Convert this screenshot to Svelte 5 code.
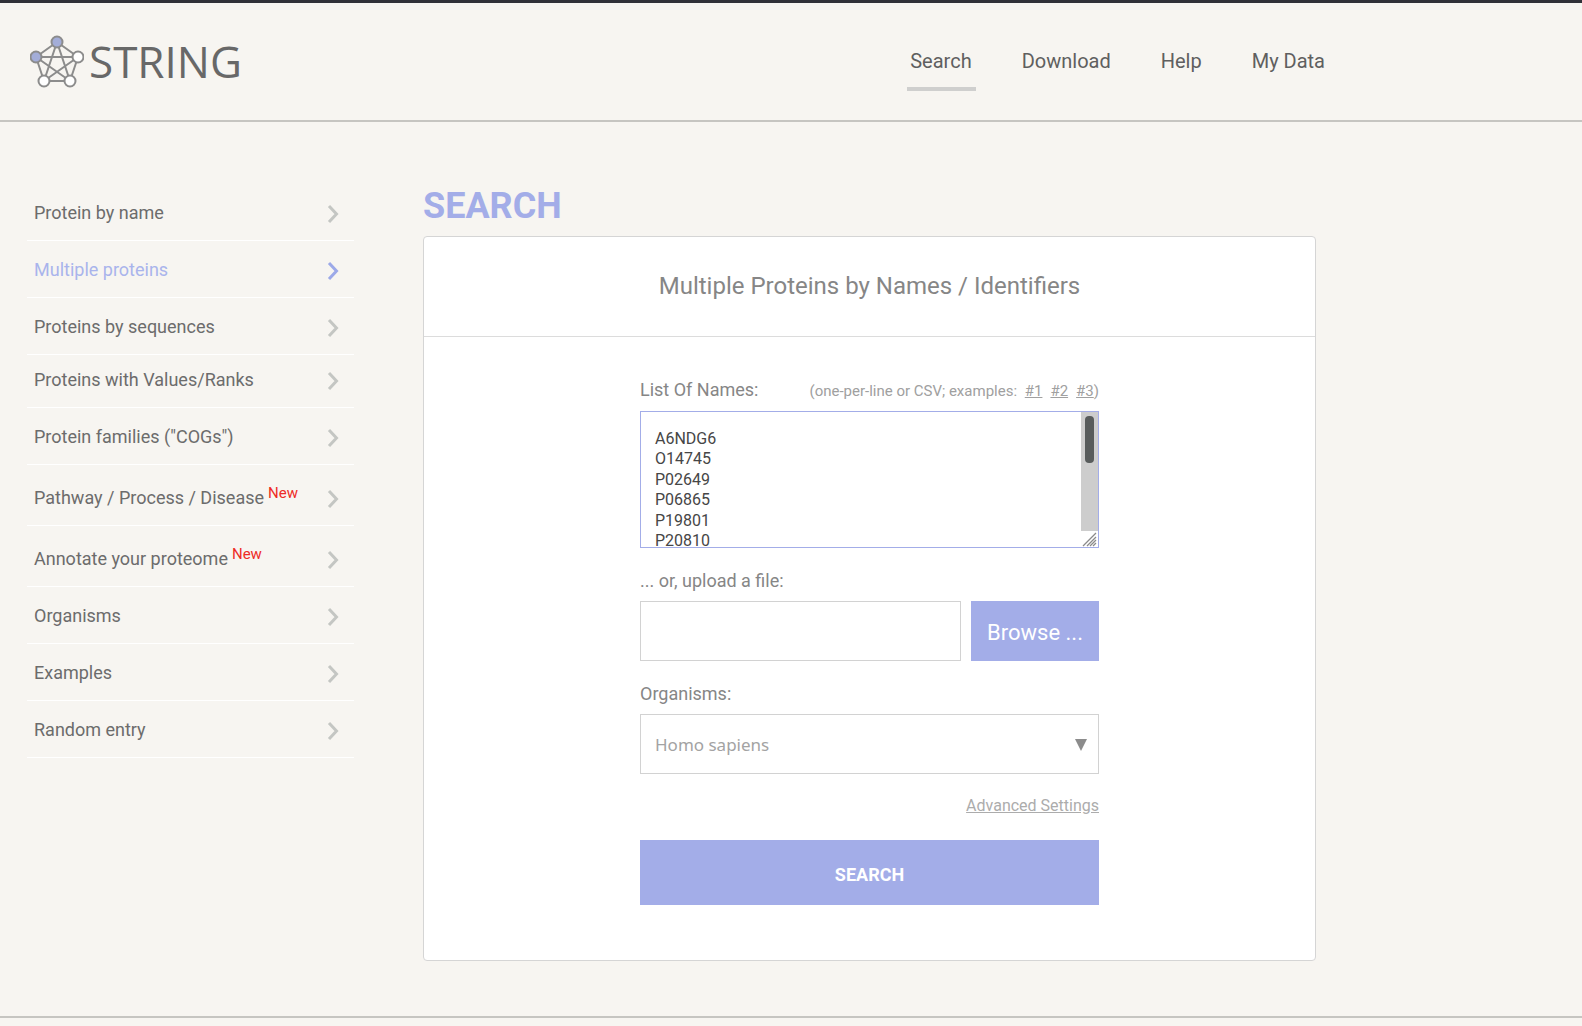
<script>
  const nav = ['Search', 'Download', 'Help', 'My Data'];

  const modes = [
    { label: 'Protein by name' },
    { label: 'Multiple proteins', active: true },
    { label: 'Proteins by sequences' },
    { label: 'Proteins with Values/Ranks', compact: true },
    { label: 'Protein families ("COGs")' },
    { label: 'Pathway / Process / Disease', isNew: true },
    { label: 'Annotate your proteome', isNew: true },
    { label: 'Organisms' },
    { label: 'Examples' },
    { label: 'Random entry' },
  ];

  let names = $state(
    [
      'A6NDG6', 'O14745', 'P02649', 'P06865', 'P19801', 'P20810',
      'P21397', 'P27338', 'P30086', 'P31946', 'P36871', 'P40925',
    ].join('\n')
  );
  let fileName = $state('');
  let organism = $state('Homo sapiens');

  // Share of the list that is scrolled past, from 0 to 1.
  let scrolled = $state(0);

  function trackScroll(event) {
    const box = event.currentTarget;
    const range = box.scrollHeight - box.clientHeight;
    scrolled = range > 0 ? box.scrollTop / range : 0;
  }
</script>

<header class="site-header">
  <div class="header-inner">
    <a class="logo" href="#home" aria-label="STRING">
      <svg class="logo-mark" viewBox="0 0 54 54" aria-hidden="true">
        <path
          d="M27 7 6 22M27 7l21 15M27 7 14 46M27 7l13 39M6 22h42M6 22l8 24M6 22l34 24M48 22l-8 24M48 22 14 46M14 46h26"
        />
        <g class="plain">
          <circle cx="48" cy="22" r="5.5" />
          <circle cx="14" cy="46" r="5.5" />
          <circle cx="40" cy="46" r="5.5" />
        </g>
        <g class="tinted">
          <circle cx="27" cy="7" r="5.5" />
          <circle cx="6" cy="22" r="5.5" />
        </g>
      </svg>
      <span class="logo-text">STRING</span>
    </a>
    <nav class="main-nav" aria-label="Main">
      {#each nav as item, i}
        <a href="#{item}" class:current={i === 0}>{item}</a>
      {/each}
    </nav>
  </div>
</header>

<main class="content">
  <nav class="modes" aria-label="Search modes">
    {#each modes as mode}
      <a href="#{mode.label}" class:active={mode.active} class:compact={mode.compact} class:flagged={mode.isNew}>
        <span class="mode-label">{mode.label}{#if mode.isNew}<span class="new">New</span>{/if}</span>
        <svg class="chevron" viewBox="0 0 12 20" aria-hidden="true"><path d="M2 2l7.5 8L2 18" /></svg>
      </a>
    {/each}
  </nav>

  <section class="search">
    <h1>SEARCH</h1>
    <div class="card">
      <h2>Multiple Proteins by Names / Identifiers</h2>
      <form onsubmit={(e) => e.preventDefault()}>
        <div class="label-row">
          <label for="names">List Of Names:</label>
          <span class="hint">
            (one-per-line or CSV; examples:
            <span class="examples"><a href="#1">#1</a><a href="#2">#2</a><span><a href="#3">#3</a>)</span></span>
          </span>
        </div>
        <div class="names-box">
          <textarea id="names" bind:value={names} onscroll={trackScroll} spellcheck="false"></textarea>
          <div class="scrollbar" aria-hidden="true">
            <div class="track">
              <div class="spacer" style:flex-grow={scrolled}></div>
              <div class="thumb"></div>
              <div class="spacer" style:flex-grow={1 - scrolled}></div>
            </div>
            <svg class="grip" viewBox="0 0 17 16">
              <path d="M2 15 15 2M6 15l9-9M9 15l6-6M12 15l3-3" />
            </svg>
          </div>
        </div>

        <div class="label-row"><label for="file">... or, upload a file:</label></div>
        <div class="upload">
          <input id="file" type="text" bind:value={fileName} />
          <button type="button" class="browse">Browse ...</button>
        </div>

        <div class="label-row"><label for="organism">Organisms:</label></div>
        <div class="select-wrap">
          <select id="organism" bind:value={organism}>
            <option>Homo sapiens</option>
            <option>Mus musculus</option>
            <option>Saccharomyces cerevisiae</option>
          </select>
          <svg class="arrow" viewBox="0 0 12 12" aria-hidden="true"><path d="M0 0h12L6 12z" /></svg>
        </div>

        <a class="advanced" href="#advanced">Advanced Settings</a>
        <button type="submit" class="submit">SEARCH</button>
      </form>
    </div>
  </section>
</main>

<footer></footer>

<style>
  :global(body) {
    background: #f7f5f1;
    color: #6c6c6c;
    font-family: Roboto, 'Liberation Sans', sans-serif;
    font-size: 18px;
    line-height: 20px;
  }

  a {
    color: inherit;
    text-decoration: none;
  }

  .site-header {
    border-top: 3px solid #303138;
    border-bottom: 2px solid #c6c5c1;
    padding: 0 30px;
  }

  .header-inner {
    display: flex;
    align-items: center;
    justify-content: space-between;
    max-width: 1295px;
    height: 117px;
  }

  .logo {
    display: flex;
    align-items: center;
    gap: 5px;
    color: #686868;
  }

  .logo-mark {
    width: 54px;
    height: 54px;
    fill: none;
    stroke: #8c8c8c;
    stroke-width: 2;
  }

  .logo-mark .plain {
    fill: #fff;
  }

  .logo-mark .tinted {
    fill: #a3add8;
  }

  .logo-text {
    font-family: 'Open Sans', 'Noto Sans', sans-serif;
    font-size: 44px;
    font-weight: 500;
    line-height: 52px;
    padding-bottom: 2px;
  }

  .main-nav {
    display: flex;
    gap: 50px;
    padding-bottom: 2px;
    color: #5f5f5f;
    font-size: 20px;
    line-height: 24px;
  }

  .main-nav a {
    position: relative;
  }

  .main-nav .current::after {
    content: '';
    position: absolute;
    top: 38px;
    left: -3px;
    right: -4px;
    height: 4px;
    background: #cfcfce;
  }

  .content {
    display: grid;
    grid-template-columns: 327px minmax(0, 1fr);
    gap: 69px;
    max-width: 1289px;
    padding: 62px 27px 55px;
  }

  .modes a {
    display: flex;
    align-items: flex-end;
    justify-content: space-between;
    box-sizing: border-box;
    height: 57px;
    padding: 0 15px 16px 7px;
    border-bottom: 1px solid #fff;
  }

  .modes .compact {
    height: 53px;
  }

  .modes .flagged {
    height: 61px;
  }

  .modes .active {
    color: #a9b4ec;
  }

  .mode-label {
    padding-bottom: 1px;
  }

  .new {
    margin-left: 4px;
    color: #ee2b26;
    font-size: 15px;
    line-height: 0;
    vertical-align: 6px;
  }

  .chevron {
    width: 12px;
    height: 20px;
    fill: none;
    stroke: #c4c6c3;
    stroke-width: 3;
  }

  .active .chevron {
    stroke: #9ca9e8;
  }

  h1 {
    margin: 0 0 8px;
    color: #a3ade8;
    font-size: 36px;
    line-height: 44px;
  }

  .card {
    background: #fff;
    border: 1px solid #d5d5d5;
    border-radius: 4px;
  }

  h2 {
    margin: 0;
    padding: 34px 0 35px;
    border-bottom: 1px solid #dcdcdc;
    color: #868686;
    font-size: 24px;
    font-weight: 400;
    line-height: 30px;
    text-align: center;
  }

  form {
    display: flex;
    flex-direction: column;
    max-width: 459px;
    margin: 0 auto;
    padding: 43px 0 55px;
    color: #868686;
  }

  .label-row {
    display: flex;
    align-items: baseline;
    justify-content: space-between;
    margin-bottom: 10px;
  }

  .hint {
    color: #a0a0a0;
    font-size: 15px;
  }

  .examples {
    display: inline-flex;
    gap: 8px;
    margin-left: 4px;
  }

  .examples a,
  .advanced {
    text-decoration: underline;
  }

  textarea,
  input,
  select {
    box-sizing: border-box;
    margin: 0;
    background: #fff;
    border: 1px solid #d2d2d2;
    border-radius: 0;
    outline: none;
    font: inherit;
  }

  .names-box {
    position: relative;
    margin-bottom: 23px;
  }

  textarea {
    display: block;
    width: 100%;
    height: 137px;
    padding: 17px 31px 0 14px;
    border-color: #a3ade8;
    color: #464646;
    font-size: 16px;
    line-height: 1.28;
    overflow-y: scroll;
    resize: none;
    scrollbar-width: none;
  }

  .scrollbar {
    position: absolute;
    top: 1px;
    right: 1px;
    bottom: 1px;
    display: flex;
    flex-direction: column;
    width: 17px;
    pointer-events: none;
  }

  .track {
    display: flex;
    flex: 1;
    flex-direction: column;
    box-sizing: border-box;
    padding: 4px;
    background: #cdcdcd;
  }

  .spacer {
    flex-basis: 0;
  }

  .thumb {
    height: 47px;
    border-radius: 4px;
    background: #585c5c;
  }

  .grip {
    width: 17px;
    height: 16px;
    fill: none;
    stroke: #8a8a8a;
    stroke-width: 1.3;
  }

  .upload {
    display: flex;
    gap: 10px;
    margin-bottom: 23px;
  }

  .upload input {
    flex: 1;
    min-width: 0;
    height: 60px;
    padding: 0 14px;
  }

  button {
    border: 0;
    background: #a3ade8;
    color: #fff;
    font: inherit;
  }

  .browse {
    width: 128px;
    padding: 4px 0 0;
    font-size: 22px;
  }

  .select-wrap {
    position: relative;
    margin-bottom: 22px;
  }

  select {
    appearance: none;
    width: 100%;
    height: 60px;
    padding: 2px 40px 0 14px;
    color: #a3a3a3;
    font-family: 'Noto Sans', sans-serif;
    font-size: 17px;
  }

  .arrow {
    position: absolute;
    top: 25px;
    right: 12px;
    width: 12px;
    height: 12px;
    fill: #8c8c8c;
    pointer-events: none;
  }

  .advanced {
    align-self: flex-end;
    margin-bottom: 24px;
    color: #acacac;
    font-size: 16px;
  }

  .submit {
    height: 65px;
    padding: 5px 0 0;
    font-weight: 700;
  }

  footer {
    height: 7px;
    border-top: 2px solid #c6c5c1;
  }
</style>
